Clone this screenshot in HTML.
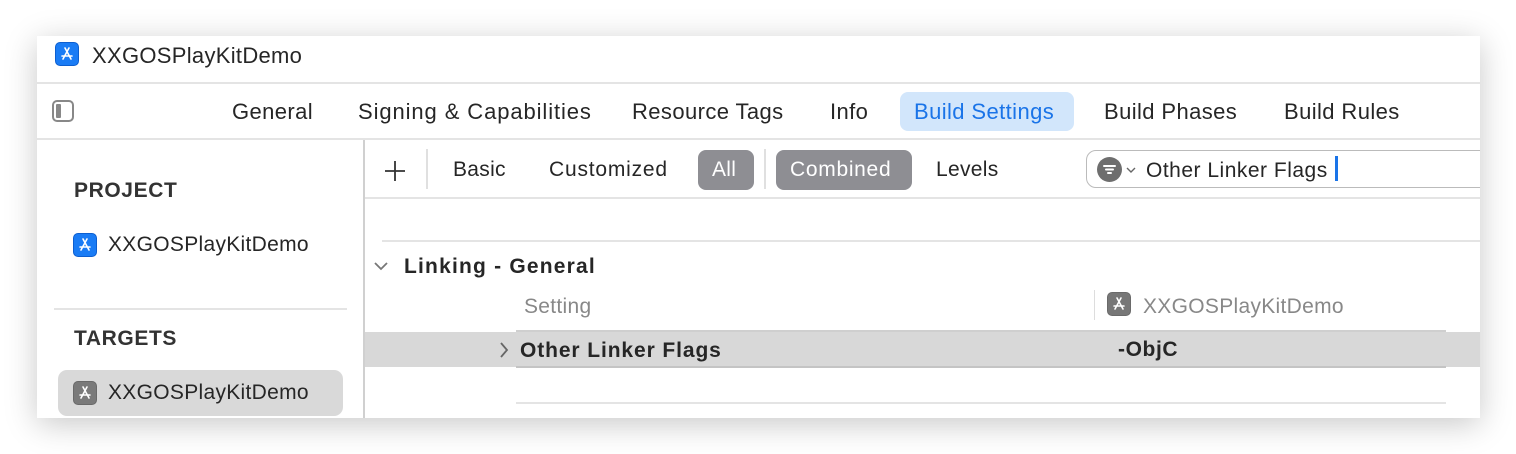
<!DOCTYPE html>
<html><head><style>
body{margin:0;width:1516px;height:454px;background:#fff;position:relative;overflow:hidden;font-family:"Liberation Sans",sans-serif;color:#262626}
.win{position:absolute;left:37px;top:36px;width:1443px;height:382px;background:#fff;box-shadow:0 6px 30px rgba(0,0,0,.22);overflow:hidden}
.a{position:absolute;white-space:nowrap}
.t{font-size:22px;letter-spacing:0.4px}
.r{font-size:21px;letter-spacing:0.3px}
.b{font-size:21px;font-weight:bold;letter-spacing:0.6px}
.hl{position:absolute;height:2px;background:#e4e4e4}
.ic{position:absolute;width:24px;height:24px;border-radius:5px;background:#1a7cf5;border:1px solid #0d5fd0;box-sizing:border-box}
.ic svg{position:absolute;left:2px;top:2px}
.g{background:#7a7a7a;border-color:#6a6a6a}
</style></head><body>
<div class="win">
 <div class="ic" style="left:18px;top:6px"><svg width="18" height="18" viewBox="0 0 18 18" fill="none" stroke="#fff" stroke-width="1.6" stroke-linecap="round"><path d="M7 3l6 11M11 3L5 14M4 11h10"/></svg></div>
 <div class="a" style="left:55px;top:7px;font-size:22px;letter-spacing:0.3px">XXGOSPlayKitDemo</div>
 <div class="hl" style="left:0;top:46px;width:1443px"></div>
 <div class="a" style="left:15px;top:64px;width:22px;height:22px;border:2px solid #888;border-radius:5px;box-sizing:border-box"><div style="position:absolute;left:2px;top:2px;width:5px;height:14px;background:#888;border-radius:1px"></div></div>
 <div class="a t" style="left:195px;top:63px">General</div>
 <div class="a t" style="left:321px;top:63px;letter-spacing:0.9px">Signing &amp; Capabilities</div>
 <div class="a t" style="left:595px;top:63px">Resource Tags</div>
 <div class="a t" style="left:793px;top:63px">Info</div>
 <div class="a" style="left:863px;top:56px;width:174px;height:39px;background:#d2e6fb;border-radius:8px"></div>
 <div class="a t" style="left:877px;top:63px;color:#1a74e8">Build Settings</div>
 <div class="a t" style="left:1067px;top:63px">Build Phases</div>
 <div class="a t" style="left:1247px;top:63px">Build Rules</div>
 <div class="hl" style="left:0;top:102px;width:1443px"></div>
 <div class="a" style="left:326px;top:104px;width:2px;height:278px;background:#d0d0d0"></div>
 <div class="a b" style="left:37px;top:143px;color:#333">PROJECT</div>
 <div class="ic" style="left:36px;top:197px"><svg width="18" height="18" viewBox="0 0 18 18" fill="none" stroke="#fff" stroke-width="1.6" stroke-linecap="round"><path d="M7 3l6 11M11 3L5 14M4 11h10"/></svg></div>
 <div class="a r" style="left:71px;top:197px">XXGOSPlayKitDemo</div>
 <div class="hl" style="left:17px;top:272px;width:293px"></div>
 <div class="a b" style="left:37px;top:291px;color:#333">TARGETS</div>
 <div class="a" style="left:21px;top:334px;width:285px;height:46px;background:#d9d9d9;border-radius:9px"></div>
 <div class="ic g" style="left:36px;top:345px"><svg width="18" height="18" viewBox="0 0 18 18" fill="none" stroke="#fff" stroke-width="1.6" stroke-linecap="round"><path d="M7 3l6 11M11 3L5 14M4 11h10"/></svg></div>
 <div class="a r" style="left:71px;top:345px">XXGOSPlayKitDemo</div>
 <svg class="a" style="left:346px;top:123px" width="24" height="24" viewBox="0 0 24 24" stroke="#333" stroke-width="1.8"><path d="M12 2v20M2 12h20"/></svg>
 <div class="a" style="left:389px;top:113px;width:2px;height:40px;background:#e0e0e0"></div>
 <div class="a r" style="left:416px;top:122px">Basic</div>
 <div class="a r" style="left:512px;top:122px;letter-spacing:0.8px">Customized</div>
 <div class="a" style="left:661px;top:114px;width:56px;height:40px;background:#8e8e93;border-radius:8px"></div>
 <div class="a r" style="left:675px;top:122px;color:#fff">All</div>
 <div class="a" style="left:727px;top:113px;width:2px;height:40px;background:#e0e0e0"></div>
 <div class="a" style="left:739px;top:114px;width:136px;height:40px;background:#8e8e93;border-radius:8px"></div>
 <div class="a r" style="left:753px;top:122px;color:#fff;letter-spacing:0.7px">Combined</div>
 <div class="a r" style="left:899px;top:122px">Levels</div>
 <div class="a" style="left:1049px;top:114px;width:420px;height:38px;border:1px solid #bbb;border-radius:10px;box-sizing:border-box"></div>
 <div class="a" style="left:1060px;top:121px;width:25px;height:25px;border-radius:50%;background:#6e6e6e"><svg width="25" height="25" viewBox="0 0 25 25" stroke="#fff" stroke-width="2" stroke-linecap="round"><path d="M7 9h11M9 12.5h7M11 16h3"/></svg></div>
 <svg class="a" style="left:1089px;top:130px" width="10" height="8" viewBox="0 0 10 8" fill="none" stroke="#666" stroke-width="1.4"><path d="M1 2l4 4 4-4"/></svg>
 <div class="a r" style="left:1109px;top:123px;letter-spacing:0.5px">Other Linker Flags</div>
 <div class="a" style="left:1298px;top:120px;width:3px;height:25px;background:#1a74e8"></div>
 <div class="hl" style="left:328px;top:161px;width:1115px"></div>
 <div class="hl" style="left:345px;top:204px;width:1098px"></div>
 <svg class="a" style="left:337px;top:225px" width="14" height="10" viewBox="0 0 14 10" fill="none" stroke="#777" stroke-width="1.8"><path d="M1 2l6 6 6-6"/></svg>
 <div class="a b" style="left:367px;top:219px;letter-spacing:1.2px">Linking - General</div>
 <div class="a r" style="left:487px;top:259px;color:#888">Setting</div>
 <div class="a" style="left:1057px;top:254px;width:1px;height:30px;background:#ddd"></div>
 <div class="ic g" style="left:1070px;top:256px;background:#777"><svg width="18" height="18" viewBox="0 0 18 18" fill="none" stroke="#fff" stroke-width="1.6" stroke-linecap="round"><path d="M7 3l6 11M11 3L5 14M4 11h10"/></svg></div>
 <div class="a r" style="left:1106px;top:259px;color:#888">XXGOSPlayKitDemo</div>
 <div class="a" style="left:328px;top:296px;width:1115px;height:35px;background:#d8d8d8"></div>
 <div class="a" style="left:479px;top:294px;width:930px;height:2px;background:#cfcfcf"></div>
 <div class="a" style="left:479px;top:330px;width:930px;height:2px;background:#c4c4c4"></div>
 <svg class="a" style="left:462px;top:306px" width="10" height="16" viewBox="0 0 10 16" fill="none" stroke="#666" stroke-width="1.8"><path d="M2 1l6 7-6 7"/></svg>
 <div class="a b" style="left:483px;top:303px;letter-spacing:0.9px">Other Linker Flags</div>
 <div class="a b" style="left:1081px;top:302px">-ObjC</div>
 <div class="hl" style="left:479px;top:366px;width:930px"></div>
</div>
</body></html>
